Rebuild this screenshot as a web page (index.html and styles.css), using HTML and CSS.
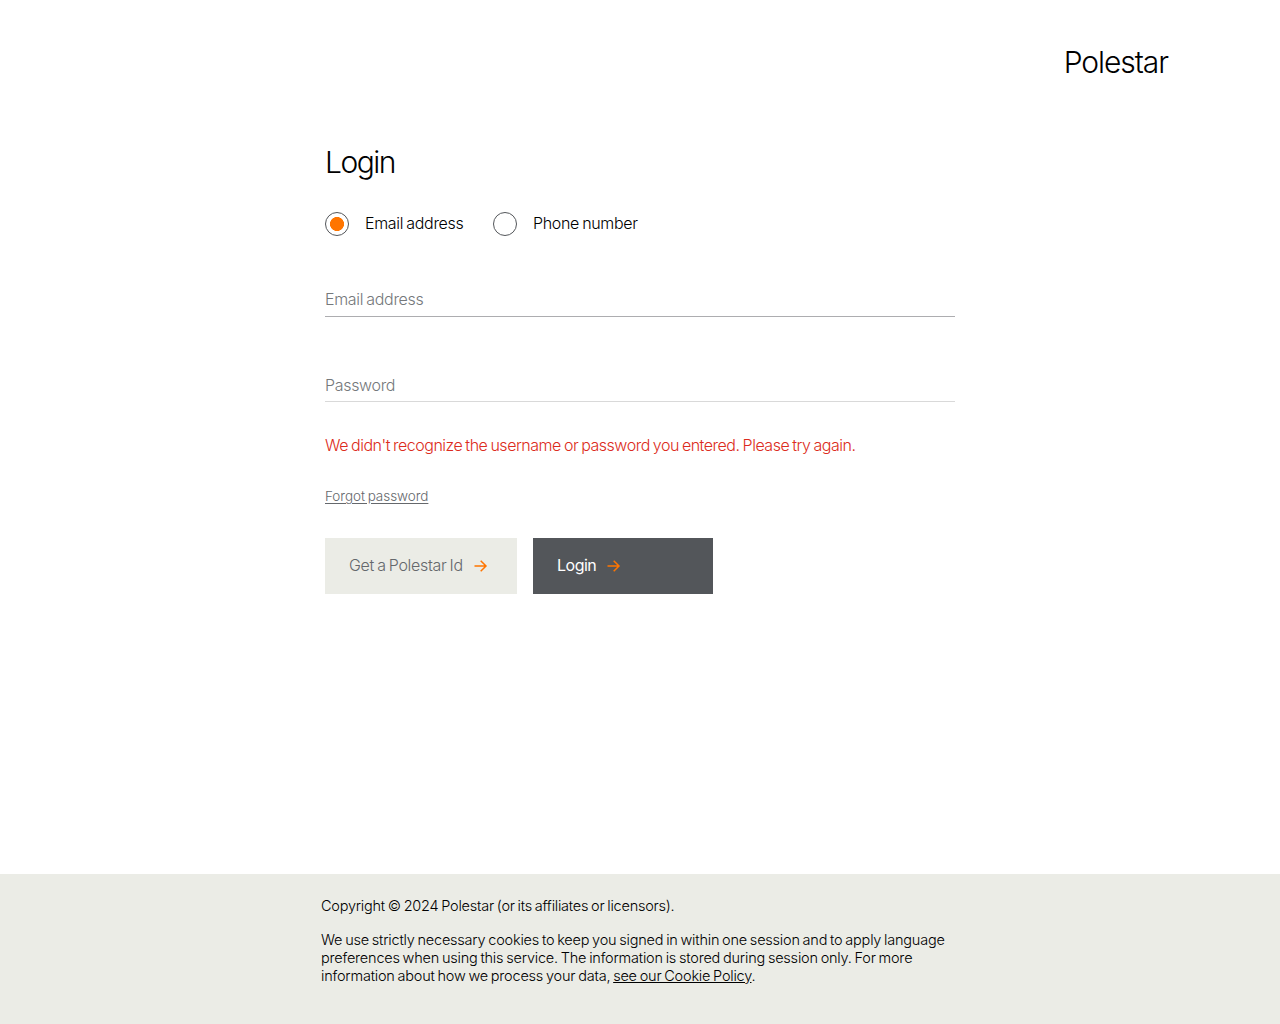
FILE: index.html
```html
<!DOCTYPE html>
<html lang="en">
<head>
<meta charset="utf-8">
<title>Login</title>
<link rel="stylesheet" href="styles.css">
</head>
<body>
<header class="header"><span class="brand">Polestar</span></header>
<main class="main">
  <h1 class="title">Login</h1>
  <div class="choices">
    <label class="choice"><span class="radio radio-on"></span><span>Email address</span></label>
    <label class="choice"><span class="radio"></span><span>Phone number</span></label>
  </div>
  <div class="field field-email"><span>Email address</span></div>
  <div class="field field-password"><span>Password</span></div>
  <p class="error">We didn't recognize the username or password you entered. Please try again.</p>
  <a class="forgot">Forgot password</a>
  <div class="actions">
    <a class="button button-light"><span class="label">Get a Polestar Id</span><svg class="arrow" viewBox="0 0 14 14"><path d="M.5 7H12M6.7 1.7 12 7 6.7 12.3"/></svg></a>
    <a class="button button-dark"><span class="label">Login</span><svg class="arrow" viewBox="0 0 14 14"><path d="M.5 7H12M6.7 1.7 12 7 6.7 12.3"/></svg></a>
  </div>
</main>
<footer class="footer">
  <div class="footer-inner">
    <p class="copyright">Copyright © 2024 Polestar (or its affiliates or licensors).</p>
    <p class="cookies">We use strictly necessary cookies to keep you signed in within one session and to apply language<br>preferences when using this service. The information is stored during session only. For more<br>information about how we process your data, <a class="policy">see our Cookie Policy</a>.</p>
  </div>
</footer>
</body>
</html>
```

FILE: styles.css
```css
* { box-sizing: border-box; }
body {
  margin: 0;
  min-height: 1024px;
  display: flex;
  flex-direction: column;
  background: #fff;
  color: #000;
  font: 16px/24px Inter, "Liberation Sans", sans-serif;
  letter-spacing: -0.5px;
  word-spacing: -1px;
  white-space: nowrap;
}
.header { display: flex; justify-content: flex-end; height: 124px; padding: 42px 112px 0 0; }
.brand { font-size: 30px; font-weight: 350; line-height: 41px; letter-spacing: -1.05px; }
.main { width: 630px; margin: 0 auto; flex: 1; }
.title { margin: 19px 0 0; font-size: 30px; font-weight: 350; line-height: 39px; letter-spacing: -1.5px; }
.choices { display: flex; gap: 29.5px; margin-top: 30px; height: 24px; font-weight: 350; line-height: 23px; letter-spacing: -0.32px; }
.choice { display: flex; gap: 16px; }
.radio { width: 24px; height: 24px; border: 1px solid #53565a; border-radius: 50%; }
.radio-on { background: radial-gradient(circle, #ff7500 6.7px, #fff 7.3px); }
.field { height: 30px; color: #75787b; border-bottom: 1px solid #d9d9d9; font-weight: 300; letter-spacing: -0.32px; }
.field-email { margin-top: 51px; border-color: #adadb0; }
.field-password { margin-top: 55px; line-height: 26px; }
.error { margin: 31px 0 0; color: #dc2b20; font-weight: 350; letter-spacing: -0.48px; }
.forgot { display: block; margin-top: 29px; color: #65686c; font-size: 13.5px; font-weight: 300; line-height: 20px; letter-spacing: -0.05px; text-decoration: underline; text-underline-offset: 2px; }
.actions { display: flex; gap: 16px; margin-top: 32px; }
.button { display: flex; align-items: center; height: 56px; padding: 0 24px; gap: 11px; }
.label { padding-bottom: 2px; }
.button-light { width: 192px; background: #ebece6; color: #65686c; font-weight: 300; letter-spacing: -0.32px; }
.button-dark { width: 180px; background: #53565a; color: #fff; }
.arrow { width: 14px; height: 14px; fill: none; stroke: #ff7500; stroke-width: 1.5; }
.footer { height: 150px; background: #ebece6; padding-top: 23px; }
.footer-inner { width: 638px; margin: 0 auto; font-size: 14.5px; font-weight: 350; line-height: 18px; letter-spacing: -0.21px; }
.copyright, .cookies { margin: 0 0 16px; }
.copyright { letter-spacing: -0.23px; }
.policy { text-decoration: underline; }
```
